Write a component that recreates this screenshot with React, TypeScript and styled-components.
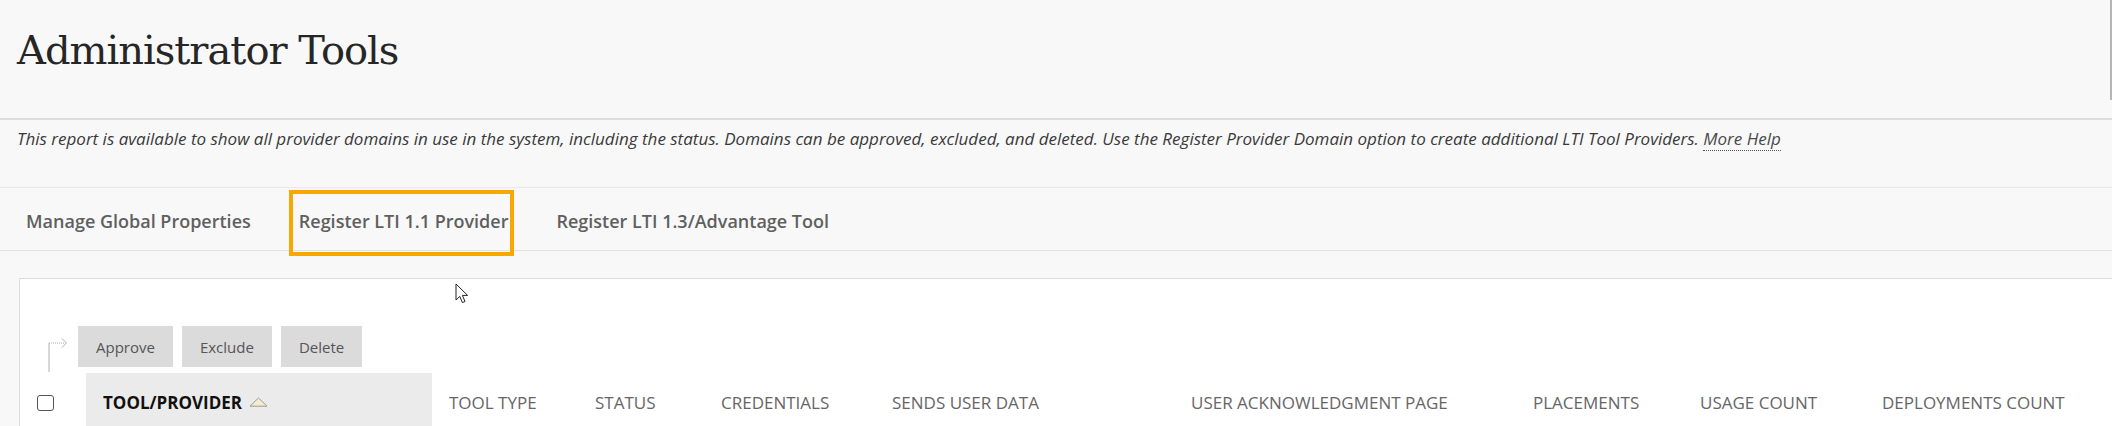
import React from 'react';
import styled, { createGlobalStyle } from 'styled-components';

const GlobalStyle = createGlobalStyle`
  html, body {
    margin: 0;
    padding: 0;
    background: #f8f8f8;
    font-family: 'Open Sans', 'Noto Sans', sans-serif;
    overflow: hidden;
  }
`;

const Page = styled.div`
  position: relative;
  width: 2112px;
  height: 426px;
  overflow: hidden;
  background: #f8f8f8;
`;

const PageHeader = styled.header`
  position: relative;
  height: 120px;
  padding: 30px 0 0 17px;
  box-sizing: border-box;
  border-bottom: 2px solid #dddddd;
`;

const Title = styled.h1`
  margin: 0;
  font-family: 'DejaVu Serif', 'Liberation Serif', serif;
  font-size: 40px;
  line-height: 40px;
  font-weight: 400;
  letter-spacing: -1px;
  color: #262626;
`;

const ScrollThumb = styled.div`
  position: absolute;
  top: 0;
  right: 0;
  width: 2px;
  height: 100px;
  background: #b5b5b5;
`;

const Intro = styled.p`
  margin: 0;
  height: 68px;
  padding: 8px 0 0 17px;
  box-sizing: border-box;
  font-size: 17px;
  line-height: 22px;
  font-style: italic;
  color: #3a3a3a;
  border-bottom: 1px solid #e8e8e8;
  white-space: nowrap;
`;

const HelpLink = styled.a`
  color: #4a4a4a;
  text-decoration: none;
  border-bottom: 1px dotted #555;
`;

const TabBar = styled.nav`
  display: flex;
  align-items: stretch;
  height: 63px;
  padding-left: 2px;
  box-sizing: border-box;
  border-bottom: 1px solid #e2e2e2;
`;

const Tab = styled.div<{ $highlighted?: boolean }>`
  position: relative;
  display: flex;
  align-items: center;
  padding: 4px 24px 0;
  font-size: 18px;
  font-weight: 600;
  color: #5f5f5f;
  white-space: nowrap;

  &::after {
    content: '';
    display: ${props => (props.$highlighted ? 'block' : 'none')};
    position: absolute;
    left: 14px;
    right: 18px;
    top: 2px;
    bottom: -6px;
    border: 4px solid #f6a800;
  }
`;

const Panel = styled.section`
  margin: 27px 0 0 19px;
  height: 200px;
  background: #ffffff;
  border-top: 1px solid #dcdcdc;
  border-left: 1px solid #dcdcdc;
`;

const ActionBar = styled.div`
  display: flex;
  align-items: flex-start;
  gap: 9px;
  height: 88px;
  padding: 47px 0 0 27px;
  box-sizing: border-box;
`;

const BranchIcon = styled.svg`
  flex-shrink: 0;
  width: 22px;
  height: 33px;
  margin-top: 8px;
  overflow: visible;
`;

const ActionButton = styled.button`
  height: 41px;
  padding: 0 18px;
  border: none;
  background: #dbdbdb;
  font-family: 'Open Sans', sans-serif;
  font-size: 15px;
  color: #555555;
`;

const HeaderRow = styled.div`
  display: grid;
  grid-template-columns: 66px 346px 146px 126px 171px 299px 342px 167px 182px 1fr;
  height: 58px;
  margin-top: 6px;
`;

const HeaderCell = styled.div<{ $active?: boolean }>`
  display: flex;
  align-items: center;
  gap: 7px;
  padding-left: 17px;
  background: ${props => (props.$active ? '#ebebeb' : 'transparent')};
  font-size: 17px;
  font-weight: ${props => (props.$active ? 700 : 400)};
  color: ${props => (props.$active ? '#111111' : '#666666')};
  text-transform: uppercase;
  white-space: nowrap;
`;

const Checkbox = styled.span`
  display: block;
  width: 15px;
  height: 14px;
  border: 1.5px solid #555555;
  border-radius: 3px;
  margin-top: 2px;
`;

const Cursor = styled.svg`
  position: absolute;
  left: 455px;
  top: 283px;
  width: 14px;
  height: 22px;
`;

const columns = [
  'Tool Type',
  'Status',
  'Credentials',
  'Sends User Data',
  'User Acknowledgment Page',
  'Placements',
  'Usage Count',
  'Deployments Count',
];

const App: React.FC = () => {
  return (
    <Page>
      <GlobalStyle />
      <PageHeader>
        <Title>Administrator Tools</Title>
        <ScrollThumb />
      </PageHeader>

      <Intro>
        This report is available to show all provider domains in use in the system, including the status.
        Domains can be approved, excluded, and deleted. Use the Register Provider Domain option to create
        additional LTI Tool Providers. <HelpLink href="#">More Help</HelpLink>
      </Intro>

      <TabBar>
        <Tab>Manage Global Properties</Tab>
        <Tab $highlighted>Register LTI 1.1 Provider</Tab>
        <Tab>Register LTI 1.3/Advantage Tool</Tab>
      </TabBar>

      <Panel>
        <ActionBar>
          <BranchIcon viewBox="0 0 22 33">
            <path d="M2 9 V38" stroke="#b0b0b0" strokeWidth="1" fill="none" />
            <path d="M2 9 H18" stroke="#b0b0b0" strokeWidth="1" strokeDasharray="1 1" fill="none" />
            <path d="M15 4.5 L19.5 9 L15 13.5" stroke="#b0b0b0" strokeWidth="1" fill="none" />
          </BranchIcon>
          <ActionButton>Approve</ActionButton>
          <ActionButton>Exclude</ActionButton>
          <ActionButton>Delete</ActionButton>
        </ActionBar>

        <HeaderRow>
          <HeaderCell>
            <Checkbox />
          </HeaderCell>
          <HeaderCell $active>
            Tool/Provider
            <svg width="19" height="10" viewBox="0 0 19 10">
              <path d="M1 9.2 L9.5 1 L18 9.2 Z" fill="#f3ecd0" stroke="#9a9a9a" strokeWidth="1" />
            </svg>
          </HeaderCell>
          {columns.map(name => (
            <HeaderCell key={name}>{name}</HeaderCell>
          ))}
        </HeaderRow>
      </Panel>

      <Cursor viewBox="0 0 14 22">
        <path
          d="M1 1 L1 17 L4.8 13.4 L7.4 19.6 L10 18.5 L7.4 12.4 L12.6 12.4 Z"
          fill="#ffffff"
          stroke="#222222"
          strokeWidth="1"
          strokeLinejoin="round"
        />
      </Cursor>
    </Page>
  );
};

export default App;
